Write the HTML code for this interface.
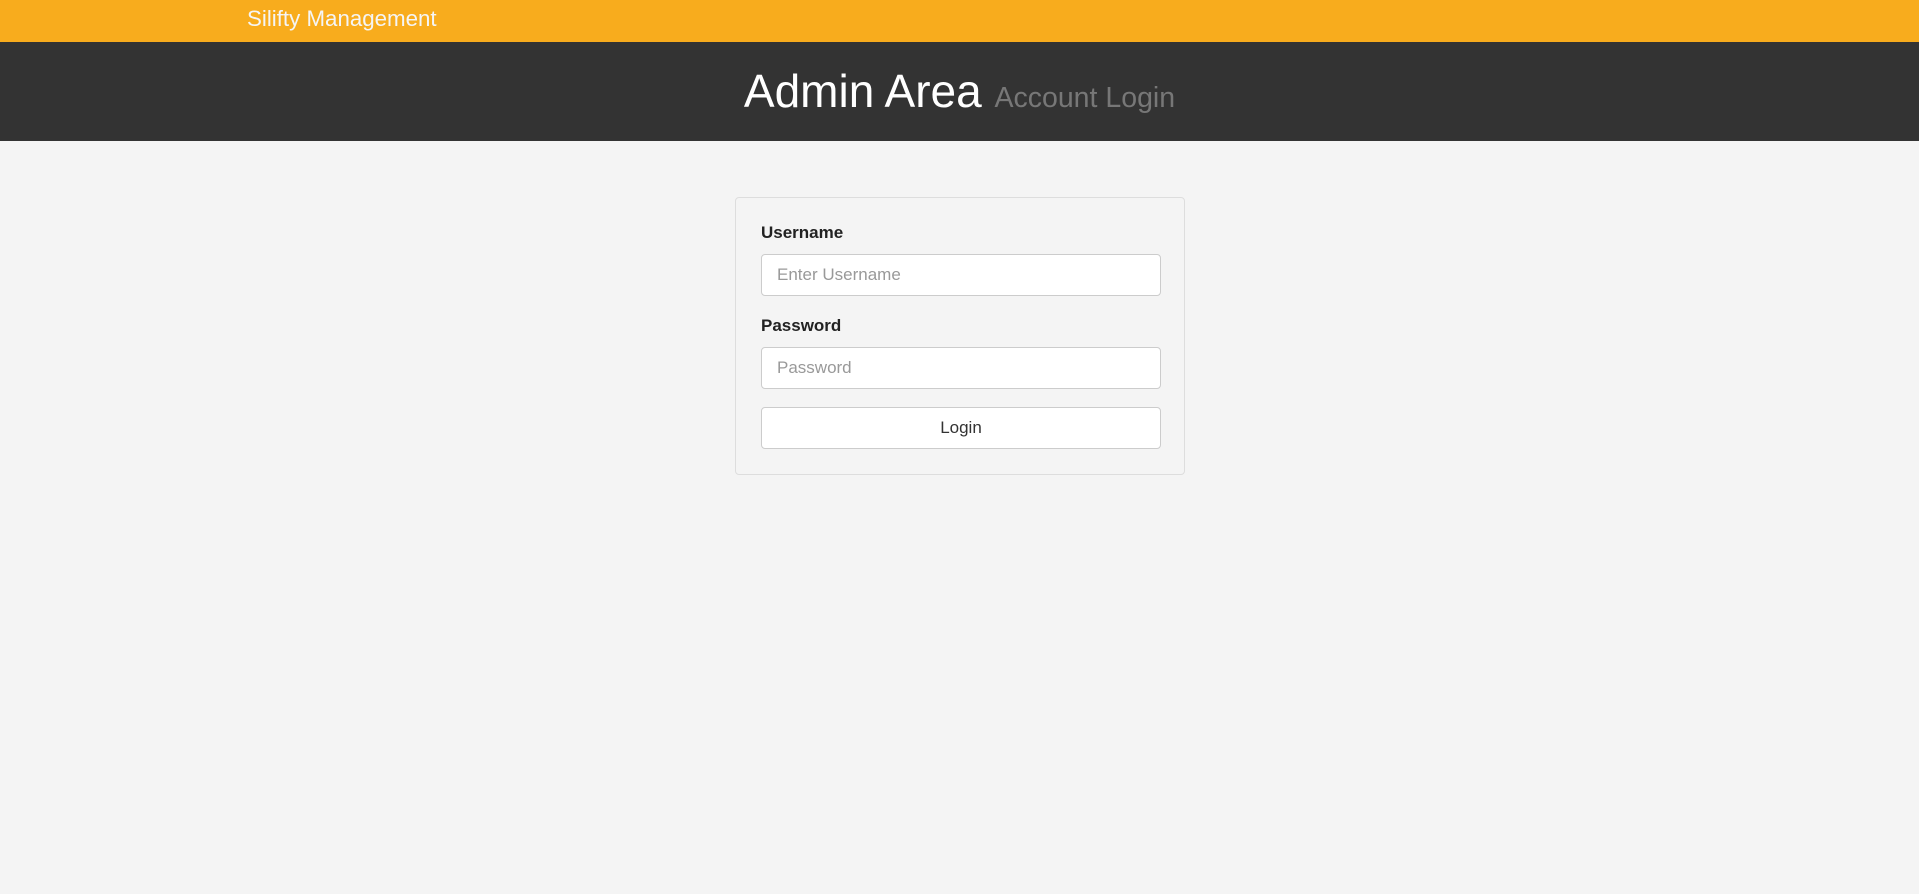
<!DOCTYPE html>
<html><head><style>
*{box-sizing:border-box;margin:0;padding:0}
body{width:1919px;height:894px;background:#f4f4f4;font-family:"Liberation Sans",Arial,sans-serif;position:relative;overflow:hidden}
.top{position:absolute;left:0;top:0;width:100%;height:42px;background:#f8ac1d}
.brand{position:absolute;left:247px;top:5px;font-size:22.3px;color:#f5f5f5;line-height:28px}
.hdr{position:absolute;left:0;top:42px;width:100%;height:99px;background:#333}
.title{position:absolute;left:0;width:100%;top:21px;text-align:center;color:#fff;font-size:46px;line-height:56px}
.title small{font-size:28.5px;color:#777}
.card{position:absolute;left:735px;top:197px;width:450px;height:278px;border:1px solid #ddd;border-radius:4px;background:#f4f4f4}
label{position:absolute;left:25px;font-weight:bold;font-size:17px;color:#222}
.in{position:absolute;left:25px;width:400px;height:42px;background:#fff;border:1px solid #ccc;border-radius:4px;font-size:17px;color:#999;padding:10px 15px;line-height:20px}
.btn{text-align:center;color:#333}
</style></head><body>
<div class="top"><div class="brand">Silifty Management</div></div>
<div class="hdr"><div class="title">Admin Area <small>Account Login</small></div></div>
<div class="card">
<label style="top:25px">Username</label>
<div class="in" style="top:56px">Enter Username</div>
<label style="top:118px">Password</label>
<div class="in" style="top:149px">Password</div>
<div class="in btn" style="top:209px">Login</div>
</div>
</body></html>
